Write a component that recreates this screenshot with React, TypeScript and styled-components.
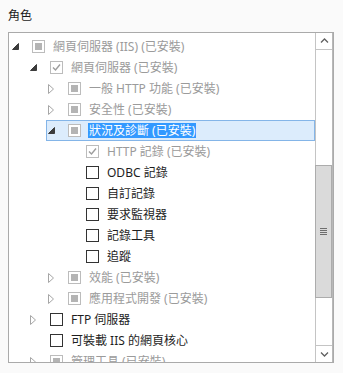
import React from "react";
import styled, { createGlobalStyle } from "styled-components";

type Check = "partial" | "done" | "empty";
type Toggle = "open" | "closed" | "none";

interface RoleNode {
  level: number;
  toggle: Toggle;
  check: Check;
  label: string;
  installed: boolean;
  selected?: boolean;
}

const roles: RoleNode[] = [
  { level: 0, toggle: "open", check: "partial", label: "網頁伺服器 (IIS) (已安裝)", installed: true },
  { level: 1, toggle: "open", check: "done", label: "網頁伺服器 (已安裝)", installed: true },
  { level: 2, toggle: "closed", check: "partial", label: "一般 HTTP 功能 (已安裝)", installed: true },
  { level: 2, toggle: "closed", check: "partial", label: "安全性 (已安裝)", installed: true },
  { level: 2, toggle: "open", check: "partial", label: "狀況及診斷 (已安裝)", installed: true, selected: true },
  { level: 3, toggle: "none", check: "done", label: "HTTP 記錄 (已安裝)", installed: true },
  { level: 3, toggle: "none", check: "empty", label: "ODBC 記錄", installed: false },
  { level: 3, toggle: "none", check: "empty", label: "自訂記錄", installed: false },
  { level: 3, toggle: "none", check: "empty", label: "要求監視器", installed: false },
  { level: 3, toggle: "none", check: "empty", label: "記錄工具", installed: false },
  { level: 3, toggle: "none", check: "empty", label: "追蹤", installed: false },
  { level: 2, toggle: "closed", check: "partial", label: "效能 (已安裝)", installed: true },
  { level: 2, toggle: "closed", check: "partial", label: "應用程式開發 (已安裝)", installed: true },
  { level: 1, toggle: "closed", check: "empty", label: "FTP 伺服器", installed: false },
  { level: 1, toggle: "none", check: "empty", label: "可裝載 IIS 的網頁核心", installed: false },
  { level: 1, toggle: "closed", check: "partial", label: "管理工具 (已安裝)", installed: true },
];

const GlobalStyle = createGlobalStyle`
  html, body {
    margin: 0;
    padding: 0;
    background: #fafafa;
  }
  body {
    font-family: "Noto Sans", "Noto Sans CJK TC", sans-serif;
    font-size: 12px;
    color: #1e1e1e;
  }
`;

const ToggleIcon = ({ toggle }: { toggle: Toggle }) => {
  if (toggle === "open") {
    return (
      <svg width="7" height="7" viewBox="0 0 7 7">
        <polygon points="0.5,6.5 6.5,6.5 6.5,0.5" fill="#3c3c3c" stroke="#3c3c3c" strokeWidth="1" />
      </svg>
    );
  }
  if (toggle === "closed") {
    return (
      <svg width="6" height="10" viewBox="0 0 6 10">
        <polygon points="0.5,0.5 5.5,5 0.5,9.5" fill="none" stroke="#a6a6a6" strokeWidth="1" />
      </svg>
    );
  }
  return null;
};

const CheckMark = () => (
  <svg width="11" height="11" viewBox="0 0 11 11">
    <polyline points="2,5.5 4.5,8 9,2.5" fill="none" stroke="#9d9d9d" strokeWidth="1.4" />
  </svg>
);

export default function App() {
  return (
    <>
      <GlobalStyle />
      <Page>
        <Heading>角色</Heading>
        <ListBox>
          <Tree>
            {roles.map((r, i) => (
              <Row key={i} $level={r.level} $selected={!!r.selected}>
                <ToggleSlot>
                  <ToggleIcon toggle={r.toggle} />
                </ToggleSlot>
                <Box $installed={r.installed}>
                  {r.check === "partial" && <Fill />}
                  {r.check === "done" && <CheckMark />}
                </Box>
                <Label $installed={r.installed} $selected={!!r.selected}>
                  {r.label}
                </Label>
              </Row>
            ))}
          </Tree>
          <ScrollBar>
            <ArrowButton $up>
              <svg width="9" height="6" viewBox="0 0 9 6">
                <polyline points="1,4.5 4.5,1 8,4.5" fill="none" stroke="#606060" strokeWidth="1.3" />
              </svg>
            </ArrowButton>
            <Track>
              <Thumb>
                <Grip>
                  <span />
                  <span />
                  <span />
                  <span />
                </Grip>
              </Thumb>
            </Track>
            <ArrowButton>
              <svg width="9" height="6" viewBox="0 0 9 6">
                <polyline points="1,1.5 4.5,5 8,1.5" fill="none" stroke="#606060" strokeWidth="1.3" />
              </svg>
            </ArrowButton>
          </ScrollBar>
        </ListBox>
      </Page>
    </>
  );
}

const Page = styled.div`
  padding: 8px 10px 0 8px;
`;

const Heading = styled.div`
  height: 16px;
  line-height: 16px;
  font-size: 12px;
  margin-bottom: 8px;
  color: #1a1a1a;
`;

const ListBox = styled.div`
  width: 326px;
  height: 331px;
  box-sizing: border-box;
  border: 1px solid #aaaaaa;
  background: #ffffff;
  display: flex;
  overflow: hidden;
`;

const Tree = styled.div`
  flex: 1;
  padding: 3px 0 0 1px;
  overflow: hidden;
`;

const Row = styled.div<{ $level: number; $selected: boolean }>`
  display: flex;
  align-items: center;
  height: 21px;
  box-sizing: border-box;
  margin-left: ${(p) => p.$level * 18}px;
  border: 1px solid ${(p) => (p.$selected ? "#84b5e8" : "transparent")};
  background: ${(p) => (p.$selected ? "#dcecfc" : "transparent")};
  white-space: nowrap;
`;

const ToggleSlot = styled.div`
  width: 20px;
  padding-left: 1px;
  flex-shrink: 0;
  display: flex;
  align-items: center;
`;

const Box = styled.div<{ $installed: boolean }>`
  width: 13px;
  height: 13px;
  box-sizing: border-box;
  border: 1px solid ${(p) => (p.$installed ? "#bcbcbc" : "#333333")};
  background: #ffffff;
  display: flex;
  align-items: center;
  justify-content: center;
  flex-shrink: 0;
`;

const Fill = styled.div`
  width: 7px;
  height: 7px;
  background: #b4b4b4;
`;

const Label = styled.span<{ $installed: boolean; $selected: boolean }>`
  margin-left: 7px;
  padding: 0 1px;
  line-height: 15px;
  color: ${(p) => (p.$selected ? "#ffffff" : p.$installed ? "#9b9b9b" : "#1e1e1e")};
  background: ${(p) => (p.$selected ? "#3399ff" : "transparent")};
`;

const ScrollBar = styled.div`
  width: 17px;
  flex-shrink: 0;
  display: flex;
  flex-direction: column;
  border-right: 1px solid #b8b8b8;
`;

const ArrowButton = styled.div<{ $up?: boolean }>`
  height: 17px;
  box-sizing: border-box;
  border-left: 1px solid #c4c4c4;
  ${(p) => (p.$up ? "border-bottom: 1px solid #c4c4c4;" : "border-top: 1px solid #c4c4c4;")}
  display: flex;
  align-items: center;
  justify-content: center;
  flex-shrink: 0;
`;

const Track = styled.div`
  flex: 1;
  border-left: 1px solid #c4c4c4;
`;

const Thumb = styled.div`
  margin: 115px 0 0 -1px;
  height: 133px;
  box-sizing: border-box;
  border: 1px solid #acacac;
  background: #dadada;
  display: flex;
  align-items: center;
  justify-content: center;
`;

const Grip = styled.div`
  display: flex;
  flex-direction: column;
  gap: 1px;

  span {
    display: block;
    width: 7px;
    height: 1px;
    background: #6e6e6e;
  }
`;
